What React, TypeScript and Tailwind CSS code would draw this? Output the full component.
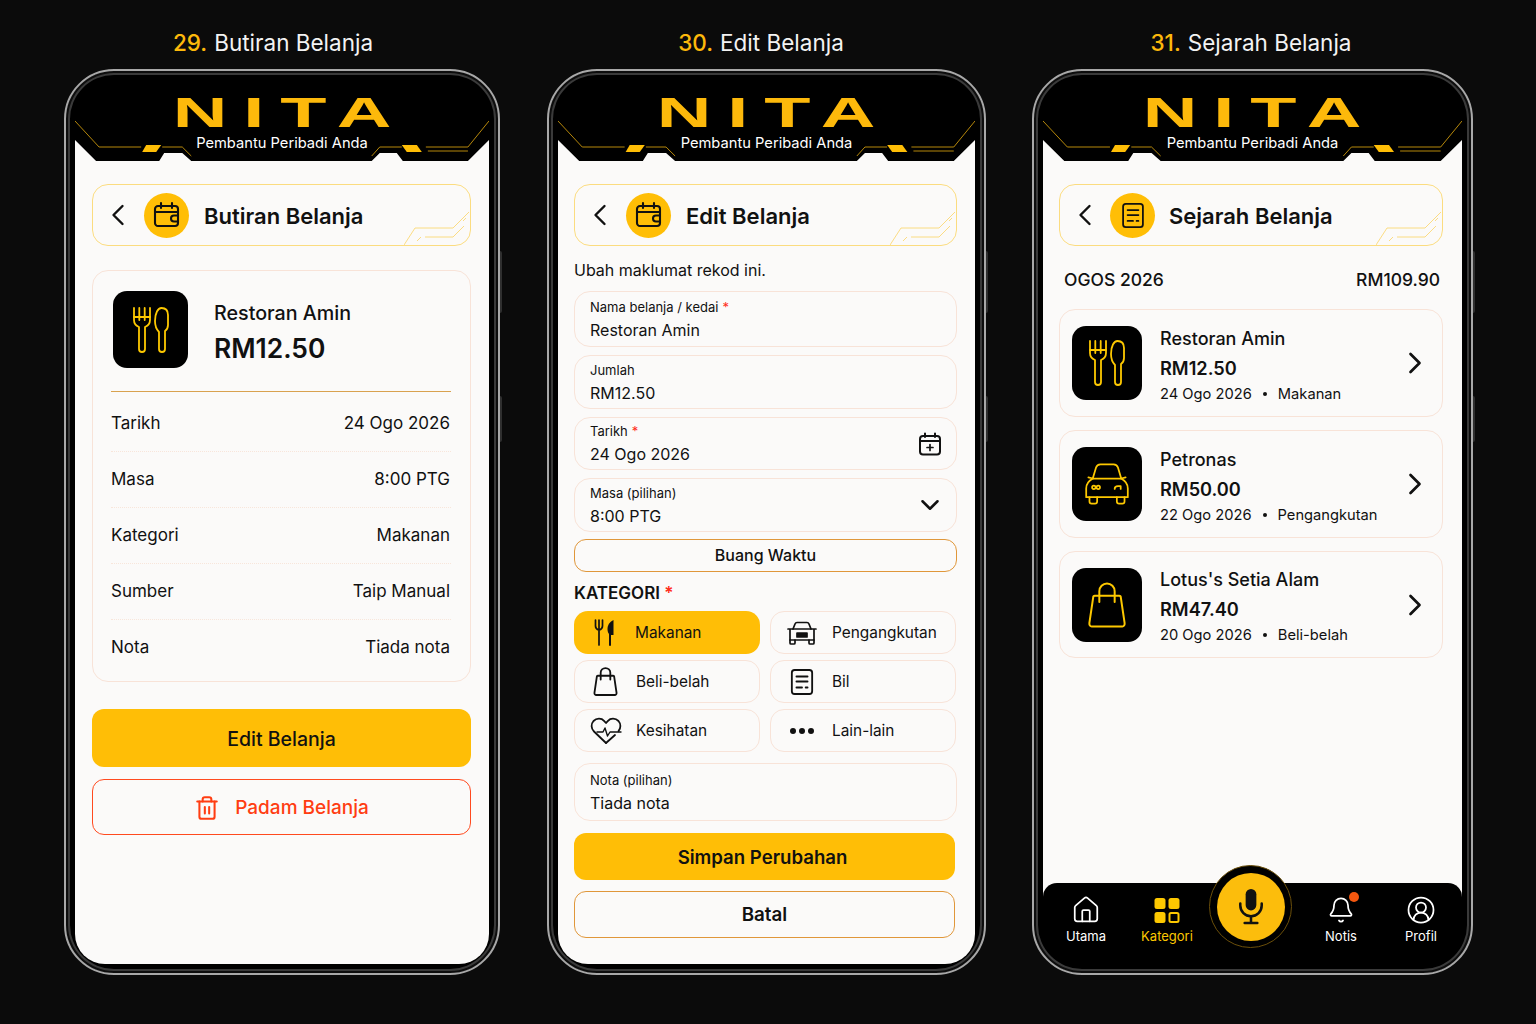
import React from 'react';
import { Bell, ChevronDown, ChevronLeft, ChevronRight, CircleUserRound, House, Trash2 } from 'lucide-react';

const YELLOW = '#ffbe06';

type IconProps = { className?: string };

function ForkKnife({ className }: IconProps) {
  return (
    <svg viewBox="0 0 36 46" fill="none" stroke="currentColor" strokeWidth="1.8" strokeLinejoin="round" strokeLinecap="round" className={className}>
      <path d="M1 1V13C1 17 3.5 19 6 20V42A3 3 0 0 0 12 42V20C14.5 19 17 17 17 13V1" />
      <path d="M6.3 1V13M11.7 1V13M1 10H17" />
      <path d="M22 14C22 6 25 1 28.5 1C32 1 35 3 35 8V18C35 21 33.5 23 32 24V42A3 3 0 0 1 26 42V25C24 23 22 20 22 14Z" />
    </svg>
  );
}

function CarOutline({ className }: IconProps) {
  return (
    <svg viewBox="0 0 42 40" fill="none" stroke="currentColor" strokeWidth="1.6" strokeLinejoin="round" strokeLinecap="round" className={className}>
      <path d="M8 15L11 5C11.6 3 13 2 15 2H27C29 2 30.4 3 31 5L34 15" />
      <path d="M8 15H34C37.5 17 40 20 40 24V32H2V24C2 20 4.5 17 8 15Z" />
      <path d="M5 32V36C5 37.2 5.8 38 7 38H10C11.2 38 12 37.2 12 36V32M30 32V36C30 37.2 30.8 38 32 38H35C36.2 38 37 37.2 37 36V32" />
      <path d="M4 14L8 15M38 14L34 15" />
      <circle cx="9" cy="23" r="1.6" />
      <circle cx="13" cy="23" r="1.6" />
      <path d="M28 24.5C28 22.5 30 22 31 22H33.5V24.5" />
    </svg>
  );
}

function Bag({ className, strokeWidth = 1.9 }: IconProps & { strokeWidth?: number }) {
  return (
    <svg viewBox="0 0 26 30" fill="none" stroke="currentColor" strokeWidth={strokeWidth} strokeLinejoin="round" strokeLinecap="round" className={className}>
      <path d="M5 9H21C21.6 9 22 9.4 22 10L24.5 26.8C24.6 28 24 29 23 29H3C2 29 1.4 28 1.5 26.8L4 10C4 9.4 4.4 9 5 9Z" />
      <path d="M8 13V6A5 5 0 0 1 18 6V13" />
    </svg>
  );
}

function WalletCalendar({ className }: IconProps) {
  return (
    <svg viewBox="0 0 28 28" fill="none" stroke="currentColor" strokeWidth="2.1" strokeLinejoin="round" strokeLinecap="round" className={className}>
      <rect x="2" y="5" width="23" height="20" rx="3" />
      <path d="M2 11H25M8 2V7M19 2V7" />
      <path d="M25 14.5H21A3 3 0 0 0 21 20.5H25" />
    </svg>
  );
}

function BillIcon({ className }: IconProps) {
  return (
    <svg viewBox="0 0 26 30" fill="none" stroke="currentColor" strokeWidth="2" strokeLinejoin="round" strokeLinecap="round" className={className}>
      <rect x="2" y="2" width="22" height="26" rx="3" />
      <path d="M7 9H19M7 14.5H19M7 21H13M17 21H19" />
    </svg>
  );
}

function CalendarAdd({ className }: IconProps) {
  return (
    <svg viewBox="0 0 24 24" fill="none" stroke="currentColor" strokeWidth="2" strokeLinejoin="round" strokeLinecap="round" className={className}>
      <rect x="2" y="4" width="20" height="18.5" rx="3" />
      <path d="M2 9H22M7 1.5V5M17 1.5V5" />
      <path d="M12 12.5V18.5M9 15.5H15" strokeWidth="1.7" />
    </svg>
  );
}

function MicSolid({ className }: IconProps) {
  return (
    <svg viewBox="0 0 26 38" fill="none" stroke="currentColor" strokeWidth="2.6" strokeLinecap="round" className={className}>
      <rect x="7.5" y="1" width="11" height="22" rx="5.5" fill="currentColor" stroke="none" />
      <path d="M2 16V18A11 11 0 0 0 24 18V16" />
      <path d="M13 29V36M6.5 36H19.5" />
    </svg>
  );
}

function Cutlery({ className }: IconProps) {
  return (
    <svg viewBox="0 0 22 28" fill="none" className={className}>
      <path d="M1.5 1V7C1.5 9.5 3 10.5 5 11V26M8.5 1V7C8.5 9.5 7 10.5 5 11M5 1V11" stroke="currentColor" strokeWidth="1.7" strokeLinecap="round" />
      <path d="M16 11V26" stroke="currentColor" strokeWidth="2" strokeLinecap="round" />
      <path d="M19.5 1C16 2.5 13.5 6 13.5 10C13.5 13 14.5 15 16 16H19.5Z" fill="currentColor" />
    </svg>
  );
}

function FrontCar({ className }: IconProps) {
  return (
    <svg viewBox="0 0 30 24" fill="none" stroke="currentColor" strokeWidth="1.7" strokeLinejoin="round" strokeLinecap="round" className={className}>
      <path d="M6 8L8 3C8.4 2 9 1.5 10 1.5H20C21 1.5 21.6 2 22 3L24 8" />
      <path d="M1 8H29M3 8V19H27V8" />
      <path d="M3 19V22C3 22.6 3.4 23 4 23H7C7.6 23 8 22.6 8 22V19M22 19V22C22 22.6 22.4 23 23 23H26C26.6 23 27 22.6 27 22V19" />
      <path d="M10 12H20V16H10Z" fill="currentColor" />
    </svg>
  );
}

function HeartBeat({ className }: IconProps) {
  return (
    <svg viewBox="0 0 32 28" fill="none" stroke="currentColor" strokeWidth="1.8" strokeLinejoin="round" strokeLinecap="round" className={className}>
      <path d="M16 26L4 14.5C1 11.5 0.8 7 3.5 4C6.5 1 11.5 1 14 3.8L16 6L18 3.8C20.5 1 25.5 1 28.5 4C31 6.8 31 11.2 28.5 14.2" />
      <path d="M7 15H13L15 11L17.5 19L20 15H31" strokeWidth="1.4" />
      <path d="M25 18L16 26" />
    </svg>
  );
}

function CategoryGrid({ className }: IconProps) {
  return (
    <svg viewBox="0 0 26 25" className={className}>
      <rect x="0.5" y="0" width="11" height="11" rx="2.5" fill="currentColor" />
      <rect x="14.5" y="0" width="11" height="11" rx="2.5" fill="currentColor" />
      <rect x="0.5" y="14" width="11" height="11" rx="2.5" fill="currentColor" />
      <rect x="15.5" y="15" width="9" height="9" rx="1.5" fill="none" stroke="currentColor" strokeWidth="2" />
    </svg>
  );
}

// black header plate with the notched lower edge
function HeaderPlate() {
  return (
    <svg viewBox="0 0 413 81" preserveAspectRatio="none" className="absolute inset-0 h-full w-full" fill="none">
      <rect x="0" y="40" width="413" height="41" fill="#fbfaf9" />
      <path d="M0 60L21 81H84L89 73H107L116 81H296L304 73H321L327 81H392L413 60V0H0Z" fill="#000" />
      <path d="M0 41L24 67H66M87 67H107L116 76" stroke="#c9960c" strokeWidth="0.9" />
      <path d="M413 41L392 67H350M326 67H304L296 76M352 71H392" stroke="#c9960c" strokeWidth="0.9" />
      <path d="M71 65H86L81 72H67Z" fill={YELLOW} />
      <path d="M326 65H341L346 72H331Z" fill={YELLOW} />
    </svg>
  );
}

function Header() {
  return (
    <div className="relative h-[81px] shrink-0">
      <HeaderPlate />
      <div className="relative flex flex-col items-center pt-[14px]">
        <div className="flex h-[36px] scale-x-[1.76] items-center pl-[9px] font-['Liberation_Sans',sans-serif] text-[43px] leading-none font-bold tracking-[9px] text-[#fdb90b]">
          NITA
        </div>
        <div className="mt-[3px] text-[14.7px] leading-[20px] text-white">Pembantu Peribadi Anda</div>
      </div>
    </div>
  );
}

function TitleBar({ title, icon, tight }: { title: string; icon: React.ReactNode; tight?: boolean }) {
  return (
    <div className="relative mt-[23px] flex h-[62px] items-center rounded-2xl border border-[#fbdc80] pl-[7px]">
      <ChevronLeft className="h-[36px] w-[36px] shrink-0 text-[#111]" strokeWidth={1.6} />
      <div className={`flex h-[45px] w-[45px] shrink-0 items-center justify-center rounded-full bg-[#ffbe06] ${tight ? 'ml-[7px]' : 'ml-[8px]'}`}>{icon}</div>
      <div className={`pt-[3px] text-[22px] font-semibold text-[#111] ${tight ? 'ml-[14px]' : 'ml-[15px]'}`}>{title}</div>
      <svg viewBox="0 0 66 33" className="absolute right-0 bottom-0 h-[33px] w-[66px]" fill="none" stroke="#fbd466" strokeWidth="0.8">
        <path d="M0 33L11 16H49L65 0" />
        <path d="M21 25H49L60 14" />
        <path d="M13 29L17 25M59 9L62 6" />
      </svg>
    </div>
  );
}

function Phone({ width, children }: { width: string; children: React.ReactNode }) {
  return (
    <div className={`relative h-[906px] ${width} shrink-0 rounded-[50px] border-2 border-[#a8a8a8] bg-black p-[9px] shadow-[inset_0_0_0_2px_#0d0d0d,inset_0_0_0_4px_#3a3a3a]`}>
      <div className="absolute top-[180px] right-[-4px] h-[62px] w-[2px] rounded-r bg-[#2f2f2f]" />
      <div className="absolute top-[325px] right-[-4px] h-[46px] w-[2px] rounded-r bg-[#2f2f2f]" />
      <div className="flex h-full flex-col overflow-hidden rounded-t-[34px] rounded-b-[30px] bg-black text-[#111]">{children}</div>
    </div>
  );
}

function Body({ className, children }: { className: string; children: React.ReactNode }) {
  return <div className={`flex flex-1 flex-col bg-[#fbfaf9] ${className}`}>{children}</div>;
}

function PhoneTitle({ num, label, offset }: { num: string; label: string; offset: string }) {
  return (
    <div className={`flex h-[69px] items-center justify-center pt-[28px] pb-[11px] text-[22.5px] leading-[30px] ${offset}`}>
      <span className="font-medium text-[#fdb90b]">{num}</span>
      <span className="ml-[7px] text-[#f3f3f3]">{label}</span>
    </div>
  );
}

const details = [
  ['Tarikh', '24 Ogo 2026'],
  ['Masa', '8:00 PTG'],
  ['Kategori', 'Makanan'],
  ['Sumber', 'Taip Manual'],
  ['Nota', 'Tiada nota'],
];

function DetailScreen() {
  return (
    <Phone width="w-[436px]">
      <Header />
      <Body className="pr-[18px] pl-[17px]">
        <TitleBar title="Butiran Belanja" icon={<WalletCalendar className="h-[28px] w-[28px] text-[#111]" />} />
        <div className="mt-[24px] h-[412px] rounded-2xl border border-[#f8e3d8] pr-[19px] pl-[18px]">
          <div className="flex h-[121px] items-start border-b border-[#d9a24f] pt-[20px]">
            <div className="ml-[2px] flex h-[77px] w-[75px] items-center justify-center rounded-[14px] bg-black">
              <ForkKnife className="h-[46px] w-[36px] text-[#fdc800]" />
            </div>
            <div className="ml-[26px] flex flex-col">
              <div className="mt-[9px] text-[19.7px] leading-[26px] font-medium">Restoran Amin</div>
              <div className="mt-[4px] text-[26.4px] leading-[36px] font-semibold">RM12.50</div>
            </div>
          </div>
          <div className="pt-[4px]">
            {details.map(([label, value], i) => (
              <div key={label} className={`flex h-[56px] items-center justify-between pr-[1px] text-[17px] ${i < 4 ? 'border-b border-dotted border-[#f8e6db]' : ''}`}>
                <span>{label}</span>
                <span>{value}</span>
              </div>
            ))}
          </div>
        </div>
        <div className="mt-[27px] flex h-[58px] items-center justify-center rounded-xl bg-[#ffbe06] pt-[3px] text-[19.5px] font-medium">Edit Belanja</div>
        <div className="mt-[12px] flex h-[56px] items-center justify-center rounded-xl border border-[#ff4a1f] pt-[2px] text-[19px] font-medium text-[#ff3d12]">
          <Trash2 className="mr-[15px] h-[26px] w-[26px]" strokeWidth={1.9} />
          Padam Belanja
        </div>
      </Body>
    </Phone>
  );
}

function Field({ label, value, required, height, right }: { label: string; value: string; required?: boolean; height: string; right?: React.ReactNode }) {
  return (
    <div className={`flex ${height} items-center justify-between rounded-2xl border border-[#f8e3d8] pr-[11px] pl-[15px]`}>
      <div className="flex flex-col">
        <div className="text-[13px] leading-[18px]">
          {label}
          {required && <span className="ml-[4px] text-[#ff2d1a]">*</span>}
        </div>
        <div className="mt-[3px] text-[16px] leading-[22px]">{value}</div>
      </div>
      {right && <div className="flex w-[30px] justify-center">{right}</div>}
    </div>
  );
}

function CategoryCell({ label, icon, active }: { label: string; icon: React.ReactNode; active?: boolean }) {
  return (
    <div className={`flex h-[43px] items-center rounded-[14px] ${active ? 'bg-[#ffbe06]' : 'border border-[#f8e3d8]'}`}>
      <div className="flex w-[61px] shrink-0 justify-center">{icon}</div>
      <span className="text-[15.4px]">{label}</span>
    </div>
  );
}

function EditScreen() {
  return (
    <Phone width="w-[439px]">
      <Header />
      <Body className="pr-[18px] pl-[16px]">
        <TitleBar title="Edit Belanja" icon={<WalletCalendar className="h-[28px] w-[28px] text-[#111]" />} />
        <div className="mt-[14px] text-[16px] leading-[20px]">Ubah maklumat rekod ini.</div>
        <div className="mt-[11px] flex flex-col gap-[8px]">
          <Field label="Nama belanja / kedai" value="Restoran Amin" required height="h-[56px]" />
          <Field label="Jumlah" value="RM12.50" height="h-[54px]" />
          <Field label="Tarikh" value="24 Ogo 2026" required height="h-[53px]" right={<CalendarAdd className="h-[24px] w-[24px]" />} />
          <Field label="Masa (pilihan)" value="8:00 PTG" height="h-[54px]" right={<ChevronDown className="h-[30px] w-[30px]" strokeWidth={2} />} />
        </div>
        <div className="mt-[7px] flex h-[33px] items-center justify-center rounded-xl border border-[#e0973a] pb-[1px] text-[16px] font-medium">Buang Waktu</div>
        <div className="mt-[11px] pt-[1px] text-[17px] leading-[19px] font-semibold">
          KATEGORI <span className="text-[#ff2d1a]">*</span>
        </div>
        <div className="mt-[8px] mr-[1px] grid grid-cols-2 gap-x-[10px] gap-y-[6px]">
          <CategoryCell active label="Makanan" icon={<Cutlery className="h-[28px] w-[22px]" />} />
          <CategoryCell label="Pengangkutan" icon={<FrontCar className="h-[24px] w-[30px]" />} />
          <CategoryCell label="Beli-belah" icon={<Bag className="h-[29px] w-[25px]" />} />
          <CategoryCell label="Bil" icon={<BillIcon className="h-[28px] w-[24px]" />} />
          <CategoryCell label="Kesihatan" icon={<HeartBeat className="h-[28px] w-[32px]" />} />
          <CategoryCell
            label="Lain-lain"
            icon={
              <div className="flex gap-[3px]">
                <div className="h-[6px] w-[6px] rounded-full bg-[#111]" />
                <div className="h-[6px] w-[6px] rounded-full bg-[#111]" />
                <div className="h-[6px] w-[6px] rounded-full bg-[#111]" />
              </div>
            }
          />
        </div>
        <div className="mt-[11px]">
          <Field label="Nota (pilihan)" value="Tiada nota" height="h-[58px]" />
        </div>
        <div className="mt-[12px] mr-[2px] flex h-[47px] items-center justify-center rounded-xl bg-[#ffbe06] pt-[2px] pr-[4px] text-[18.6px] font-semibold">Simpan Perubahan</div>
        <div className="mt-[11px] mr-[2px] flex h-[47px] items-center justify-center rounded-xl border border-[#e0973a] pt-[2px] text-[18.8px] font-semibold">Batal</div>
      </Body>
    </Phone>
  );
}

const history = [
  { name: 'Restoran Amin', amount: 'RM12.50', date: '24 Ogo 2026', cat: 'Makanan', icon: <ForkKnife className="h-[46px] w-[36px] text-[#fdc800]" /> },
  { name: 'Petronas', amount: 'RM50.00', date: '22 Ogo 2026', cat: 'Pengangkutan', icon: <CarOutline className="h-[44px] w-[46px] text-[#fdc800]" /> },
  { name: "Lotus's Setia Alam", amount: 'RM47.40', date: '20 Ogo 2026', cat: 'Beli-belah', icon: <Bag className="h-[46px] w-[40px] text-[#fdc800]" strokeWidth={1.3} /> },
];

function NavItem({ label, icon, className }: { label: string; icon: React.ReactNode; className: string }) {
  return (
    <div className={`flex flex-col items-center text-[13px] leading-[18px] ${className}`}>
      <div className="flex h-[30px] items-center justify-center">{icon}</div>
      <div className="mt-[2px]">{label}</div>
    </div>
  );
}

function HistoryScreen() {
  return (
    <Phone width="w-[441px]">
      <Header />
      <Body className="pr-[19px] pl-[16px]">
        <TitleBar tight title="Sejarah Belanja" icon={<BillIcon className="h-[27px] w-[24px] text-[#111]" />} />
        <div className="mt-[24px] flex h-[20px] items-center justify-between pr-[3px] pl-[5px] text-[17.5px] font-medium">
          <span>OGOS 2026</span>
          <span>RM109.90</span>
        </div>
        <div className="mt-[19px] flex flex-col gap-[13px]">
          {history.map((item) => (
            <div key={item.name} className="flex h-[108px] items-center rounded-2xl border border-[#f8e3d8] pr-[9px] pl-[12px] last:h-[107px]">
              <div className="flex h-[74px] w-[70px] shrink-0 items-center justify-center rounded-[14px] bg-black">{item.icon}</div>
              <div className="ml-[18px] flex flex-1 flex-col pt-[5px]">
                <div className="text-[18px] leading-[24px] font-medium">{item.name}</div>
                <div className="mt-[5px] text-[18.2px] leading-[24px] font-semibold">{item.amount}</div>
                <div className="mt-[3px] flex items-center text-[14.7px] leading-[22px]">
                  <span>{item.date}</span>
                  <span className="mx-[11px] h-[4px] w-[4px] rounded-full bg-[#111]" />
                  <span>{item.cat}</span>
                </div>
              </div>
              <ChevronRight className="h-[36px] w-[36px] shrink-0" strokeWidth={1.8} />
            </div>
          ))}
        </div>
      </Body>
      {/* light only behind the rounded top corners of the bar */}
      <div className="shrink-0 bg-[linear-gradient(#fbfaf9_50%,#000_50%)]">
        <div className="relative flex h-[81px] rounded-t-[14px] bg-black pt-[12px] pl-[3px] text-white">
          <NavItem className="w-[80px]" label="Utama" icon={<House className="h-[30px] w-[30px]" strokeWidth={1.4} />} />
          <NavItem className="ml-[1px] w-[80px] text-[#fdc800]" label="Kategori" icon={<CategoryGrid className="h-[25px] w-[26px]" />} />
          <div className="relative w-[90px]">
            <div className="absolute top-[-30px] left-[2px] flex h-[83px] w-[83px] items-center justify-center rounded-full border border-[#6b4f0a] bg-black">
              <div className="flex h-[68px] w-[68px] items-center justify-center rounded-full bg-[#fcbd0c]">
                <MicSolid className="h-[37px] w-[26px] text-[#111]" />
              </div>
            </div>
          </div>
          <NavItem
            className="ml-[4px] w-[80px]"
            label="Notis"
            icon={
              <div className="relative">
                <Bell className="h-[28px] w-[28px]" strokeWidth={1.5} />
                <div className="absolute top-[-4px] right-[-4px] h-[10px] w-[10px] rounded-full bg-[#f4570f]" />
              </div>
            }
          />
          <NavItem className="w-[80px]" label="Profil" icon={<CircleUserRound className="h-[30px] w-[30px]" strokeWidth={1.4} />} />
        </div>
      </div>
    </Phone>
  );
}

export default function App() {
  return (
    <div className="h-[1024px] w-[1536px] overflow-hidden bg-[#0b0b0b] font-['Inter',sans-serif]">
      <div className="flex pl-[64px]">
        <div>
          <PhoneTitle num="29." label="Butiran Belanja" offset="pr-[18px]" />
          <DetailScreen />
        </div>
        <div className="ml-[47px]">
          <PhoneTitle num="30." label="Edit Belanja" offset="pr-[11px]" />
          <EditScreen />
        </div>
        <div className="ml-[46px]">
          <PhoneTitle num="31." label="Sejarah Belanja" offset="pr-[3px]" />
          <HistoryScreen />
        </div>
      </div>
    </div>
  );
}
